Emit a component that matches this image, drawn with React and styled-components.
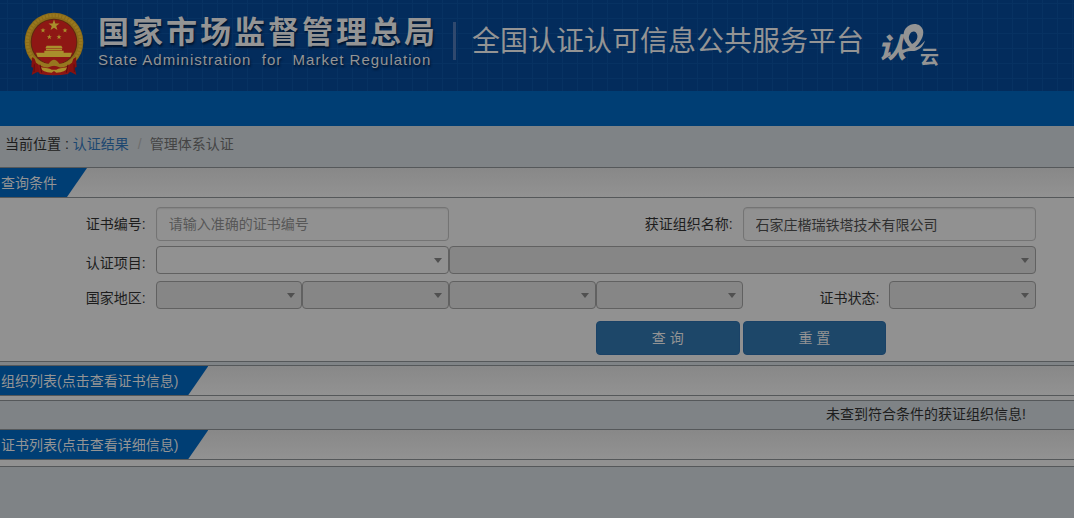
import React from "react";
import styled, { createGlobalStyle } from "styled-components";

const GlobalStyle = createGlobalStyle`
  * {
    box-sizing: border-box;
  }

  body {
    margin: 0;
    background: #7f8386;
    color: #1d1d1d;
    font-family: "Liberation Sans", "Noto Sans CJK SC", sans-serif;
    font-size: 14px;
    line-height: 20px;
  }
`;

const Header = styled.header`
  display: flex;
  align-items: flex-start;
  height: 91px;
  padding-left: 24px;
  color: #949494;
  background-color: #032c5c;
  background-image: repeating-linear-gradient(
      to right,
      transparent 0 7px,
      #073262 7px 8px,
      transparent 8px 15px
    ),
    repeating-linear-gradient(
      to bottom,
      transparent 0 3px,
      #073262 3px 4px,
      transparent 4px 15px
    );
`;

const EmblemIcon = styled.svg`
  flex: none;
  width: 60px;
  height: 64px;
  margin-top: 12px;
`;

const Agency = styled.div`
  flex: none;
  margin: 14px 0 0 14px;
  white-space: pre;
  text-shadow: 1px 2px 2px #01142e;
`;

const AgencyName = styled.div`
  font-size: 31px;
  font-weight: 700;
  line-height: 38px;
  letter-spacing: 3px;
`;

const AgencyEnglish = styled.div`
  font-size: 15px;
  line-height: 16px;
  letter-spacing: 1px;
`;

const Divider = styled.div`
  flex: none;
  width: 3px;
  height: 38px;
  margin: 22px 16px 0 15px;
  background: #30496e;
`;

const PlatformName = styled.h1`
  flex: none;
  margin: 22px 14px 0 0;
  font-size: 28px;
  font-weight: 400;
  line-height: 40px;
`;

const CloudLogo = styled.svg`
  flex: none;
  width: 64px;
  height: 48px;
  margin-top: 22px;
`;

const NavBar = styled.nav`
  height: 35px;
  background: #003e74;
`;

const Breadcrumb = styled.div`
  display: flex;
  height: 41px;
  padding: 8px 5px;
  gap: 4px;
`;

const CrumbLink = styled.a`
  color: #1d4770;
  text-decoration: none;
`;

const CrumbSlash = styled.span`
  padding: 0 4px 0 5px;
  color: #6d6d6d;
`;

const CrumbCurrent = styled.span`
  color: #444;
`;

const TitleBar = styled.div`
  display: flex;
  height: 31px;
  border-top: 1px solid #55585a;
  border-bottom: 1px solid #55585a;
  background: linear-gradient(#888, #929292);
`;

const Tab = styled.h2`
  margin: 0;
  padding: 1px 30px 0 1px;
  background: #003e74;
  color: #949494;
  font-size: 14px;
  font-weight: 400;
  line-height: 28px;
  clip-path: polygon(0 0, 100% 0, calc(100% - 20px) 100%, 0 100%);
`;

const SearchForm = styled.form`
  padding: 9px 38px 6px 9px;
  border-bottom: 1px solid #55585a;
  background: #919191;
`;

const Row = styled.div`
  display: grid;
  grid-template-columns: repeat(7, 1fr);
  align-items: start;
  margin-bottom: ${(props) => props.$gap || 0}px;
`;

const Label = styled.label`
  grid-column: span ${(props) => props.$span || 1};
  padding-right: 10px;
  line-height: 34px;
  text-align: right;
`;

const TextInput = styled.input`
  grid-column: span 2;
  width: 100%;
  height: 34px;
  padding: 0 12px;
  border: 1px solid #747474;
  border-radius: 4px;
  background: #919191;
  box-shadow: inset 0 1px 1px #868686;
  color: #303030;
  font: inherit;

  &::placeholder {
    color: #575757;
    opacity: 1;
  }
`;

const SelectBox = styled.div`
  position: relative;
  grid-column: span ${(props) => props.$span || 1};
  height: 28px;

  &::after {
    content: "";
    position: absolute;
    top: 12px;
    right: 7px;
    border: 4px solid transparent;
    border-top: 5px solid #505050;
    border-bottom: 0;
    pointer-events: none;
  }
`;

const Select = styled.select`
  display: block;
  width: 100%;
  height: 28px;
  padding: 0 20px 0 8px;
  border: 1px solid #616161;
  border-radius: 4px;
  background: ${(props) => (props.disabled ? "#868686" : "#919191")};
  color: #303030;
  font: inherit;
  opacity: 1;
  appearance: none;
`;

const Button = styled.button`
  height: 34px;
  margin-right: 3px;
  padding: 0;
  border: 1px solid #1a4267;
  border-radius: 4px;
  background: #1d4769;
  color: #949494;
  font: inherit;
  cursor: pointer;

  &:first-child {
    grid-column-start: 5;
  }
`;

const Section = styled.section`
  margin-top: ${(props) => props.$gap || 0}px;
`;

const ListTop = styled.div`
  height: ${(props) => props.$height}px;
  border-bottom: 1px solid #55585a;
  background: #919191;
`;

const EmptyMessage = styled.p`
  margin: 0;
  padding: 3px 48px 5px 0;
  text-align: right;
`;

const STAR = "0,-10 2.4,-3.2 9.5,-3.1 3.8,1.2 5.9,8.1 0,4 -5.9,8.1 -3.8,1.2 -9.5,-3.1 -2.4,-3.2";

const Emblem = () => (
  <EmblemIcon viewBox="0 0 180 192" aria-hidden="true">
    <circle cx="90" cy="90" r="88" fill="#8b6b18" />
    <circle cx="90" cy="90" r="80" fill="none" stroke="#99781f" strokeWidth="10" strokeDasharray="7 3" />
    <circle cx="90" cy="90" r="70" fill="#5f2810" />
    <circle cx="90" cy="90" r="67" fill="#8e1714" />
    <g fill="#a98f2c">
      <polygon points={STAR} transform="translate(90 40) scale(1.75)" />
      <polygon points={STAR} transform="translate(57 55) scale(.8)" />
      <polygon points={STAR} transform="translate(123 55) scale(.8)" />
      <polygon points={STAR} transform="translate(76 75) scale(.8)" />
      <polygon points={STAR} transform="translate(105 75) scale(.8)" />
      <path d="M68 101h44l4 8H64zM66 110h48v5H66zM61 116h58v7H61zM36 122h108l-5 13H41z" />
    </g>
    <path d="M24 136l34 18-4 31-14-5-17 9 5-22-6-2zM156 136l-34 18 4 31 14-5 17 9-5-22 6-2z" fill="#85110f" />
    <path d="M38 144q52 34 104 0l-9 42q-43 8-86 0z" fill="#8c1513" />
    <path d="M30 134q26 22 44 21 16-24 32 0 18 1 44-21l-6 18q-20 16-38 14-16-10-32 0-18 2-38-14z" fill="#97771f" />
    <path d="M50 166q24 2 33 7h14q9-5 33-7-5 16-33 16l-7-5-7 5q-28 0-33-16z" fill="#a98f2c" />
    <path d="M31 157l-1 23M150 157l1 23M132 158l-5 24M48 158l5 24" stroke="#600b0d" strokeWidth="3" />
  </EmblemIcon>
);

const Cloud = () => (
  <CloudLogo viewBox="0 0 64 48" fill="#949494" role="img" aria-label="认e云">
    <text
      x="0"
      y="36"
      fontSize="28"
      fontWeight="900"
      fontStyle="italic"
      fontFamily="Noto Sans CJK SC, sans-serif"
    >
      认
    </text>
    <path
      fillRule="evenodd"
      d="M29 22C25 18 24 9 29 5C34 0 43 1 45 8C46.500 14 42 21 37 25.500C41 25 44 22 47 18.500C45 26 39 29.500 33 29C29 29 27 30 24 32C22 30 20 29 20 28C25 28 29 27 32 25C30 24.500 29.500 23 29 22ZM34 22C39 20 41 14 38 10.500C35 7.500 30 12 31 17C31.300 19 33 20 34 22Z"
    />
    <text x="42" y="42" fontSize="19" fontWeight="700" fontFamily="Noto Sans CJK SC, sans-serif">
      云
    </text>
  </CloudLogo>
);

const Dropdown = ({ id, span, label, disabled }) => (
  <SelectBox $span={span}>
    <Select id={id} aria-label={label} disabled={disabled} defaultValue="">
      <option value=""></option>
    </Select>
  </SelectBox>
);

const App = () => {
  return (
    <>
      <GlobalStyle />
      <Header>
        <Emblem />
        <Agency>
          <AgencyName>国家市场监督管理总局</AgencyName>
          <AgencyEnglish>State Administration  for  Market Regulation</AgencyEnglish>
        </Agency>
        <Divider />
        <PlatformName>全国认证认可信息公共服务平台</PlatformName>
        <Cloud />
      </Header>
      <NavBar />
      <Breadcrumb>
        <span>当前位置 :</span>
        <CrumbLink href="#">认证结果</CrumbLink>
        <CrumbSlash>/</CrumbSlash>
        <CrumbCurrent>管理体系认证</CrumbCurrent>
      </Breadcrumb>

      <TitleBar>
        <Tab>查询条件</Tab>
      </TitleBar>
      <SearchForm onSubmit={(e) => e.preventDefault()}>
        <Row $gap={5}>
          <Label htmlFor="certNo">证书编号:</Label>
          <TextInput id="certNo" placeholder="请输入准确的证书编号" />
          <Label htmlFor="orgName" $span={2}>
            获证组织名称:
          </Label>
          <TextInput id="orgName" defaultValue="石家庄楷瑞铁塔技术有限公司" />
        </Row>
        <Row $gap={1}>
          <Label htmlFor="project">认证项目:</Label>
          <Dropdown id="project" span={2} />
          <Dropdown label="认证项目明细" span={4} disabled />
        </Row>
        <Row $gap={6}>
          <Label htmlFor="country">国家地区:</Label>
          <Dropdown id="country" disabled />
          <Dropdown label="省份" disabled />
          <Dropdown label="城市" disabled />
          <Dropdown label="区县" disabled />
          <Label htmlFor="status">证书状态:</Label>
          <Dropdown id="status" disabled />
        </Row>
        <Row>
          <Button type="submit">查 询</Button>
          <Button type="reset">重 置</Button>
        </Row>
      </SearchForm>

      <Section $gap={3}>
        <TitleBar>
          <Tab>组织列表(点击查看证书信息)</Tab>
        </TitleBar>
        <ListTop $height={5} />
        <EmptyMessage>未查到符合条件的获证组织信息!</EmptyMessage>
      </Section>
      <Section>
        <TitleBar>
          <Tab>证书列表(点击查看详细信息)</Tab>
        </TitleBar>
        <ListTop $height={7} />
      </Section>
    </>
  );
};

export default App;
